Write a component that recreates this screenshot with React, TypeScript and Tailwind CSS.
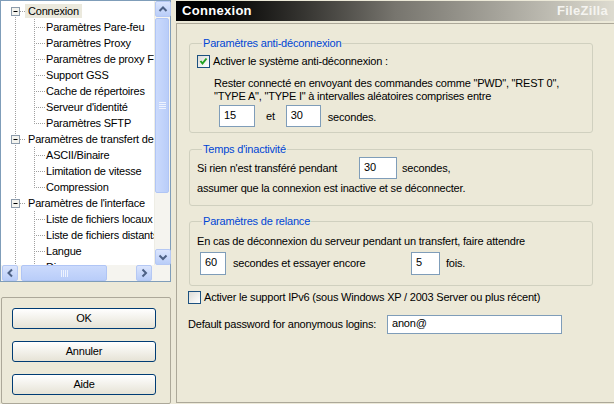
import React from "react";

type Node = { label: string; level: 0 | 1; selected?: boolean; first?: boolean; last?: boolean };

const tree: Node[] = [
  { label: "Connexion", level: 0, selected: true, first: true },
  { label: "Paramètres Pare-feu", level: 1 },
  { label: "Paramètres Proxy", level: 1 },
  { label: "Paramètres de proxy FTP", level: 1 },
  { label: "Support GSS", level: 1 },
  { label: "Cache de répertoires", level: 1 },
  { label: "Serveur d'identité", level: 1 },
  { label: "Paramètres SFTP", level: 1, last: true },
  { label: "Paramètres de transfert de fichiers", level: 0 },
  { label: "ASCII/Binaire", level: 1 },
  { label: "Limitation de vitesse", level: 1 },
  { label: "Compression", level: 1, last: true },
  { label: "Paramètres de l'interface", level: 0 },
  { label: "Liste de fichiers locaux", level: 1 },
  { label: "Liste de fichiers distants", level: 1 },
  { label: "Langue", level: 1 },
  { label: "Divers", level: 1 },
];

const dot = { stroke: "#a0a0a0", strokeDasharray: "1 1" };

function TreeLines({ node }: { node: Node }) {
  if (node.level === 0) {
    return (
      <svg width="24" height="16" className="shrink-0">
        <line x1="14.5" y1={node.first ? 8 : 0} x2="14.5" y2="16" {...dot} />
        <line x1="19" y1="8.5" x2="24" y2="8.5" {...dot} />
        <rect x="10.5" y="4.5" width="8" height="8" fill="#f4f4ef" stroke="#8c9bab" />
        <line x1="12.5" y1="8.5" x2="16.5" y2="8.5" stroke="#000" />
      </svg>
    );
  }
  return (
    <svg width="44" height="16" className="shrink-0">
      <line x1="14.5" y1="0" x2="14.5" y2="16" {...dot} />
      <line x1="33.5" y1="0" x2="33.5" y2={node.last ? 9 : 16} {...dot} />
      <line x1="35" y1="8.5" x2="44" y2="8.5" {...dot} />
    </svg>
  );
}

function Arrow({ dir }: { dir: "up" | "down" | "left" | "right" }) {
  const d = {
    up: "M4.5 10 L8 6.5 L11.5 10",
    down: "M4.5 6.5 L8 10 L11.5 6.5",
    left: "M10 4.5 L6.5 8 L10 11.5",
    right: "M6.5 4.5 L10 8 L6.5 11.5",
  }[dir];
  return (
    <div className="w-[16px] h-[16px] rounded-[2px] border border-[#b5c8f4] bg-linear-to-b from-[#dbe5fd] to-[#b9cdf8] flex items-center justify-center shrink-0">
      <svg width="16" height="16" className="-m-px">
        <path d={d} fill="none" stroke="#4d6185" strokeWidth="2" />
      </svg>
    </div>
  );
}

function Tree() {
  return (
    <div className="w-[171px] h-[282px] border border-[#7f9db9] bg-white grid grid-cols-[1fr_16px] grid-rows-[1fr_16px]">
      <div className="overflow-hidden pt-[2px]">
        {tree.map((n) => (
          <div key={n.label} className="h-[16px] flex items-center whitespace-nowrap">
            <TreeLines node={n} />
            <span
              className={
                "h-[14px] leading-[14px] " +
                (n.level === 0 ? "px-[3px] " : "px-px ") +
                (n.selected ? "bg-[#ebe9dd]" : "")
              }
            >
              {n.label}
            </span>
          </div>
        ))}
      </div>
      <div className="flex flex-col bg-[#f5f4ef] border-l border-[#eeede5] pr-px">
        <Arrow dir="up" />
        <div className="mt-px h-[175px] rounded-[2px] border border-[#b0c5f5] bg-linear-to-r from-[#cbdafc] to-[#b9cdf9] flex items-center justify-center">
          <div className="flex flex-col gap-px">
            <div className="w-[7px] h-px bg-[#eef3fe]" />
            <div className="w-[7px] h-px bg-[#eef3fe]" />
            <div className="w-[7px] h-px bg-[#eef3fe]" />
            <div className="w-[7px] h-px bg-[#eef3fe]" />
          </div>
        </div>
        <div className="flex-1" />
        <Arrow dir="down" />
      </div>
      <div className="flex bg-[#f5f4ef] pl-[1px] pr-[2px]">
        <Arrow dir="left" />
        <div className="ml-[3px] w-[86px] rounded-[2px] border border-[#b0c5f5] bg-linear-to-b from-[#cbdafc] to-[#b9cdf9] flex items-center justify-center">
          <div className="flex gap-px">
            <div className="w-px h-[7px] bg-[#eef3fe]" />
            <div className="w-px h-[7px] bg-[#eef3fe]" />
            <div className="w-px h-[7px] bg-[#eef3fe]" />
            <div className="w-px h-[7px] bg-[#eef3fe]" />
          </div>
        </div>
        <div className="flex-1" />
        <Arrow dir="right" />
      </div>
      <div className="bg-[#f5f4ef]" />
    </div>
  );
}

function Button({ children }: { children: React.ReactNode }) {
  return (
    <button className="w-[144px] h-[21px] rounded-[3px] border border-[#003c74] bg-linear-to-b from-white to-[#e6e3d6] text-black leading-[19px]">
      {children}
    </button>
  );
}

function Input({ value, className }: { value: string; className: string }) {
  return (
    <div className={"border border-[#7f9db9] bg-white pl-[4px] flex items-center shrink-0 " + className}>
      <span className="-mt-[2px]">{value}</span>
    </div>
  );
}

function Checkbox({ checked }: { checked?: boolean }) {
  return (
    <div className="w-[13px] h-[13px] border border-[#1c5180] bg-linear-to-br from-[#dcdcd7] to-white shrink-0 flex items-center justify-center">
      {checked && (
        <svg width="11" height="11">
          <path d="M2.5 5 L4.5 7.5 L8.5 2.5" fill="none" stroke="#21a121" strokeWidth="2" />
        </svg>
      )}
    </div>
  );
}

function Group({ title, className, children }: { title: string; className: string; children: React.ReactNode }) {
  return (
    <fieldset className={"w-[404px] ml-[12px] border border-[#d0d0bf] rounded-[3px] pl-[7px] " + className}>
      <legend className="ml-[5px] px-px leading-[13px] text-[#0046d5]">{title}</legend>
      {children}
    </fieldset>
  );
}

export default function App() {
  return (
    <div className="w-[614px] h-[404px] overflow-hidden bg-[#ece9d8] flex font-['Liberation_Sans',Arial,sans-serif] text-[11px] tracking-[-0.2px] text-black">
      <div className="w-[171px] flex flex-col shrink-0">
        <Tree />
        <div className="mt-[15px] ml-px h-[120px] border border-[#aca899] rounded-[2px] pl-[10px] pt-[10px] flex flex-col gap-[12px]">
          <Button>OK</Button>
          <Button>Annuler</Button>
          <Button>Aide</Button>
        </div>
      </div>

      <div className="ml-[5px] flex-1 flex flex-col">
        <div className="mt-px h-[20px] bg-linear-to-r from-black via-[#77756e] to-[#dddbd0] flex items-center justify-between pl-[6px] pr-[6px]">
          <span className="text-white font-bold text-[13px] tracking-[0.3px]">Connexion</span>
          <span className="text-[#f5f4f0] font-bold text-[13px] tracking-[0.3px]">FileZilla</span>
        </div>

        <div className="mt-[2px] flex-1 border border-[#aca899] border-r-0 mb-px pt-[13px]">
          <Group title="Paramètres anti-déconnexion" className="pb-[5px]">
            <div className="mt-[5px] h-[13px] flex items-center gap-[3px]">
              <Checkbox checked />
              <span>Activer le système anti-déconnexion :</span>
            </div>
            <div className="mt-[9px] pl-[17px] leading-[13px]">
              <div>Rester connecté en envoyant des commandes comme "PWD", "REST 0",</div>
              <div>"TYPE A", "TYPE I" à intervalles aléatoires comprises entre</div>
            </div>
            <div className="mt-[2px] pl-[22px] flex items-center">
              <Input value="15" className="w-[36px] h-[22px]" />
              <span className="ml-[11px]">et</span>
              <Input value="30" className="ml-[11px] w-[35px] h-[22px]" />
              <span className="ml-[7px] mt-[3px]">secondes.</span>
            </div>
          </Group>

          <Group title="Temps d'inactivité" className="mt-[10px] pb-[10px]">
            <div className="mt-px flex items-center">
              <span className="w-[162px]">Si rien n'est transféré pendant</span>
              <Input value="30" className="w-[38px] h-[22px]" />
              <span className="ml-[5px]">secondes,</span>
            </div>
            <div className="mt-[3px] leading-[13px]">assumer que la connexion est inactive et se déconnecter.</div>
          </Group>

          <Group title="Paramètres de relance" className="mt-[9px] pb-[10px]">
            <div className="mt-[7px] leading-[13px]">En cas de déconnexion du serveur pendant un transfert, faire attendre</div>
            <div className="mt-[4px] pl-[3px] flex items-center">
              <Input value="60" className="w-[26px] h-[23px]" />
              <span className="ml-[7px] w-[178px]">secondes et essayer encore</span>
              <Input value="5" className="w-[29px] h-[23px]" />
              <span className="ml-[6px]">fois.</span>
            </div>
          </Group>

          <div className="mt-[5px] ml-[11px] h-[13px] flex items-center gap-[3px]">
            <Checkbox />
            <span>Activer le support IPv6 (sous Windows XP / 2003 Server ou plus récent)</span>
          </div>

          <div className="mt-[11px] ml-[11px] flex items-center">
            <span className="w-[199px]">Default password for anonymous logins:</span>
            <Input value="anon@" className="w-[175px] h-[19px]" />
          </div>
        </div>
      </div>
    </div>
  );
}
